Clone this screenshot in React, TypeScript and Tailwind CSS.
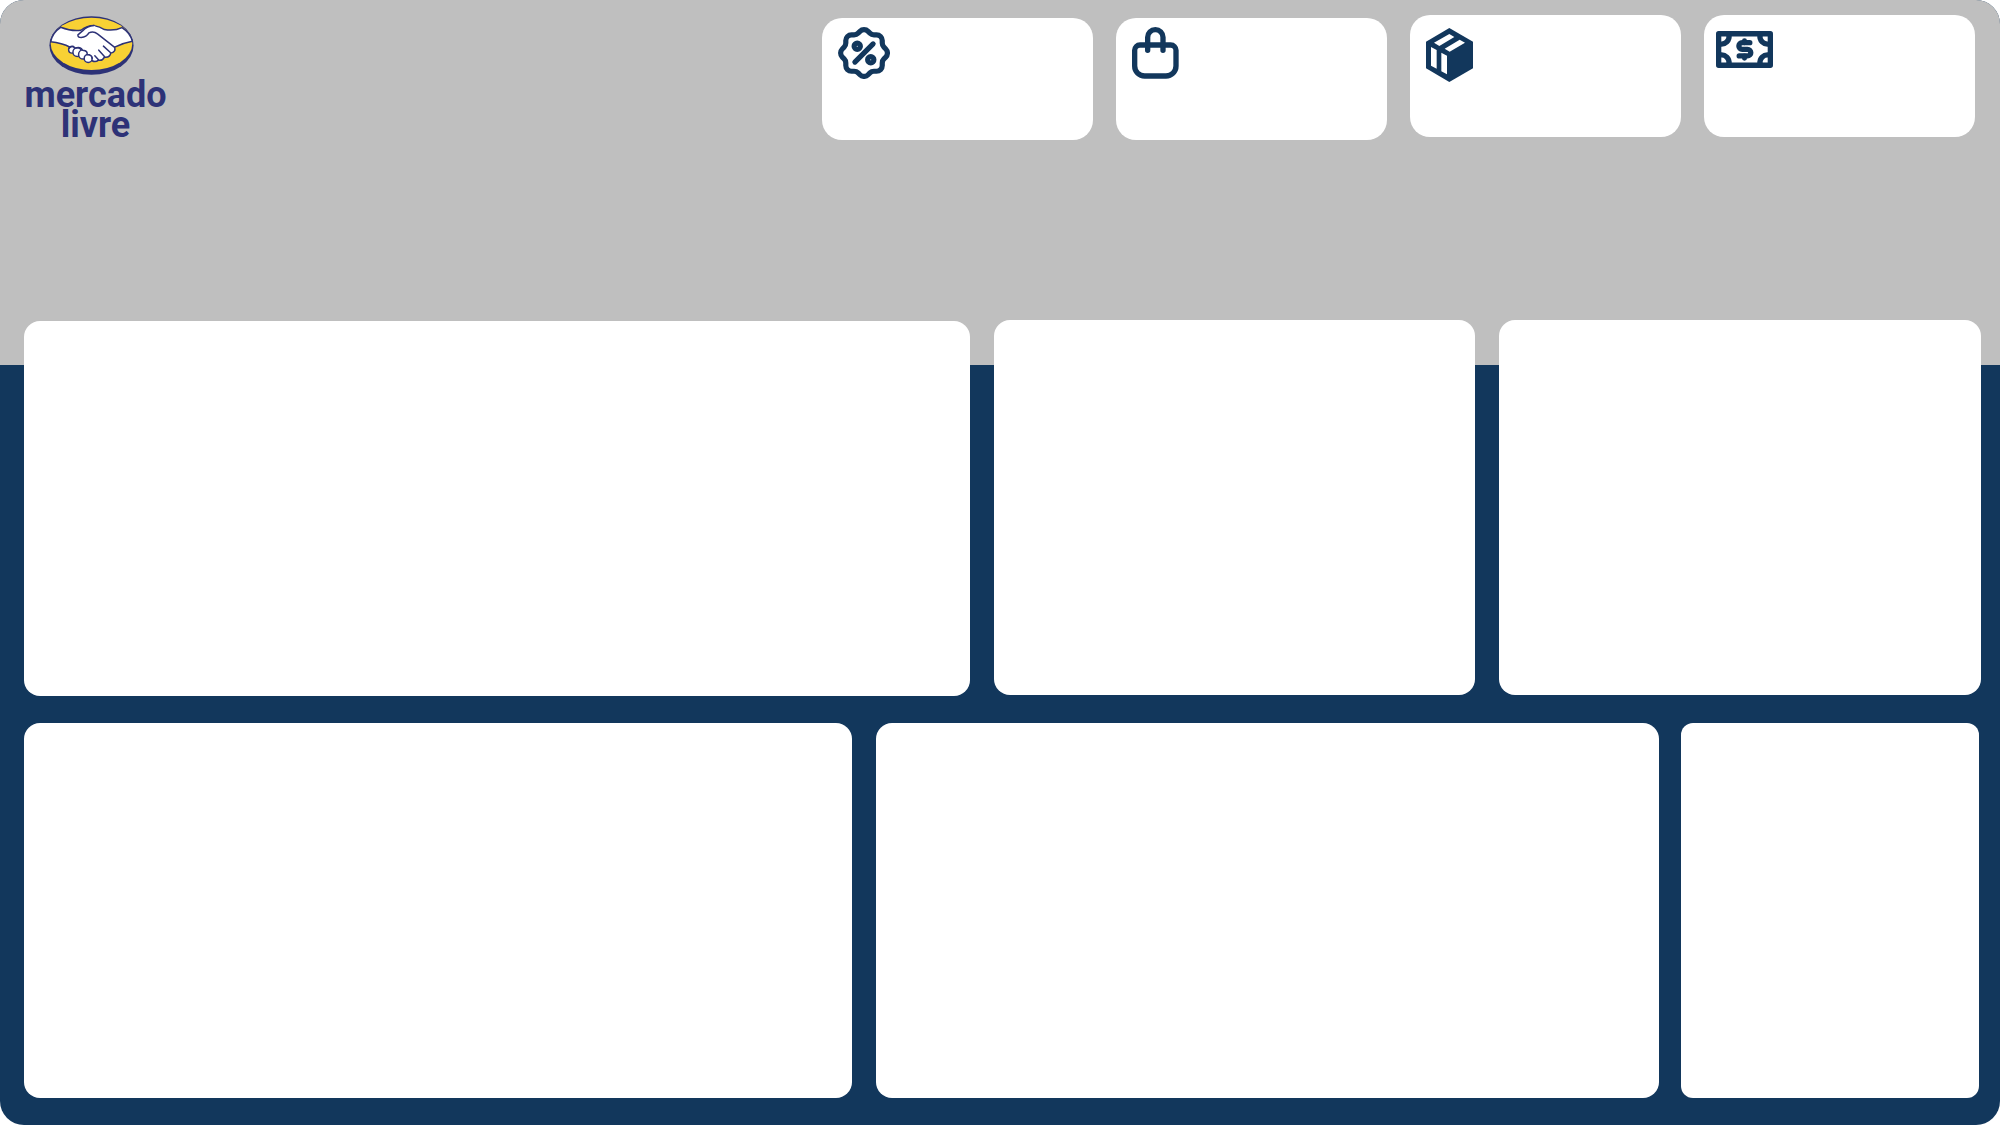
import type { ReactNode } from "react";

function HandshakeMark() {
  return (
    <svg viewBox="147 47 256 178" className="mr-2 h-[59px] w-[85px]" aria-hidden="true">
      <ellipse cx="275" cy="136" rx="127" ry="88" fill="#2d3277" />
      <ellipse cx="275" cy="131" rx="123" ry="79" fill="#f8d134" />
      <g fill="#fff" stroke="#2d3277" strokeWidth="4.5" strokeLinejoin="round" strokeLinecap="round">
        <path d="M152 125Q156 98 182 81Q215 94 243 90Q262 76 283 76Q300 79 314 88Q345 93 367 82Q392 98 398 123Q370 128 345 141Q349 156 333 159Q331 173 314 171Q308 183 296 180Q287 188 277 182L212 142Q185 128 152 125Z" />
        <circle cx="216" cy="149" r="10" />
        <circle cx="232" cy="156" r="13" />
        <circle cx="250" cy="163" r="14" />
        <circle cx="265" cy="175" r="12" />
        <path
          stroke="none"
          d="M212 139Q215 134 222 138Q226 144 231 142Q240 136 246 144Q247 151 253 151Q262 152 262 161Q266 166 272 165L279 171L284 179L296 171L310 162L325 152L337 142L300 105L250 118L212 128Z"
        />
        <path fill="none" d="M208 144Q212 136 221 139Q224 145 230 143Q240 140 245 146Q247 152 253 151Q263 153 262 163Q276 163 277 175" />
        <path stroke="none" d="M283 76Q262 77 248 92L234 104Q233 112 244 112Q260 111 267 98Q281 91 293 101L344 141Z" />
        <path fill="none" d="M283 76Q262 77 248 92L234 104Q233 112 244 112Q260 111 267 98Q281 91 293 101L344 141" />
        <path fill="none" d="M311 138L332 157M297 150L314 169M285 167L296 179" />
      </g>
    </svg>
  );
}

function Logo() {
  return (
    <div className="flex w-[143px] flex-col items-center pt-4">
      <HandshakeMark />
      <p className="mt-[5px] flex flex-col items-center font-['Roboto',sans-serif] text-4xl leading-[30px] font-bold text-[#2d3277]">
        <span className="leading-[30px]">mercado</span>
        <span className="leading-[30px]">livre</span>
      </p>
    </div>
  );
}

function DiscountIcon() {
  return (
    <svg viewBox="2 2 20 20" className="size-[52px]" fill="none" stroke="#12375c" strokeWidth="2" strokeLinecap="round" strokeLinejoin="round" aria-hidden="true">
      <path d="M5 7.2a2.2 2.2 0 0 1 2.2-2.2h1a2.2 2.2 0 0 0 1.55-.64l.7-.7a2.2 2.2 0 0 1 3.12 0l.7.7c.412.41.97.64 1.55.64h1a2.2 2.2 0 0 1 2.2 2.2v1c0 .58.23 1.138.64 1.55l.7.7a2.2 2.2 0 0 1 0 3.12l-.7.7a2.2 2.2 0 0 0-.64 1.55v1a2.2 2.2 0 0 1-2.2 2.2h-1a2.2 2.2 0 0 0-1.55.64l-.7.7a2.2 2.2 0 0 1-3.12 0l-.7-.7a2.2 2.2 0 0 0-1.55-.64h-1a2.2 2.2 0 0 1-2.2-2.2v-1a2.2 2.2 0 0 0-.64-1.55l-.7-.7a2.2 2.2 0 0 1 0-3.12l.7-.7a2.2 2.2 0 0 0 .64-1.55z" />
      <path d="M8.5 15.5l7-7" />
      <circle cx="9.4" cy="9.4" r="1.2" />
      <circle cx="14.6" cy="14.6" r="1.2" />
    </svg>
  );
}

function BagIcon() {
  return (
    <svg viewBox="98 66 141 156" className="h-[52px] w-[47px]" fill="none" stroke="#12375c" strokeWidth="16" strokeLinecap="round" aria-hidden="true">
      <path d="M122 120H214A16 16 0 0 1 230 136V183A30 30 0 0 1 200 213H136A30 30 0 0 1 106 183V136A16 16 0 0 1 122 120Z" />
      <path d="M145 136V97A23 23 0 0 1 191 97V136" />
    </svg>
  );
}

function BoxIcon() {
  return (
    <svg viewBox="78 69 141 162" className="h-[54px] w-[47px]" aria-hidden="true">
      <path fill="#12375c" d="M148 69L219 110V190L148 231L78 190V110Z" />
      <path fill="#fff" d="M148 87L163 96L118 123L102 113ZM179 104L195 113L149 140L134 131ZM93 126L110 135V191L93 182ZM124 143L141 152V208L124 199Z" />
    </svg>
  );
}

function BanknoteIcon() {
  return (
    <svg viewBox="76 92 172 111" className="h-[37px] w-[57px]" fill="none" stroke="#12375c" aria-hidden="true">
      <path strokeWidth="16" strokeLinejoin="round" d="M84 100H240V195H84Z" />
      <path strokeWidth="16" d="M115 104A23 23 0 0 1 88 131M209 104A23 23 0 0 0 236 131M115 191A23 23 0 0 0 88 164M209 191A23 23 0 0 1 236 164" />
      <path strokeWidth="16" strokeLinecap="round" d="M178 127H155A10 10 0 0 0 155 147H171A10 10 0 0 1 171 167H146" />
      <path strokeWidth="15" strokeLinecap="round" d="M162 121V127M162 167V174" />
    </svg>
  );
}

function StatCard({ label, className, children }: { label: string; className: string; children: ReactNode }) {
  return (
    <article aria-label={label} className={`h-[122px] rounded-[20px] bg-white ${className}`}>
      {children}
    </article>
  );
}

function Panel({ className }: { className: string }) {
  return <section className={`h-[375px] basis-0 bg-white ${className}`} />;
}

export default function App() {
  return (
    <div className="min-h-screen bg-white">
      <main className="min-h-screen overflow-hidden rounded-3xl bg-[#12375c]">
        <header className="flex h-[365px] items-start justify-between bg-[#bfbfbf] pr-[25px] pl-6">
          <Logo />
          <div className="grid w-[60%] max-w-[1153px] grid-cols-4 gap-[23px] pt-[15px]">
            <StatCard label="Descontos" className="mt-[3px] pt-[9px] pl-4">
              <DiscountIcon />
            </StatCard>
            <StatCard label="Vendas" className="mt-[3px] pt-[9px] pl-4">
              <BagIcon />
            </StatCard>
            <StatCard label="Produtos" className="pt-[13px] pl-4">
              <BoxIcon />
            </StatCard>
            <StatCard label="Receita" className="pt-4 pl-3">
              <BanknoteIcon />
            </StatCard>
          </div>
        </header>
        <div className="-mt-[45px] flex gap-6 pr-[19px] pl-6">
          <Panel className="mt-px grow-[946] rounded-2xl" />
          <Panel className="grow-[481] rounded-2xl" />
          <Panel className="grow-[482] rounded-2xl" />
        </div>
        <div className="mt-[27px] flex pr-[21px] pb-[27px] pl-6">
          <Panel className="mr-6 grow-[828] rounded-2xl" />
          <Panel className="mr-[22px] grow-[783] rounded-2xl" />
          <Panel className="grow-[298] rounded-xl" />
        </div>
      </main>
    </div>
  );
}
